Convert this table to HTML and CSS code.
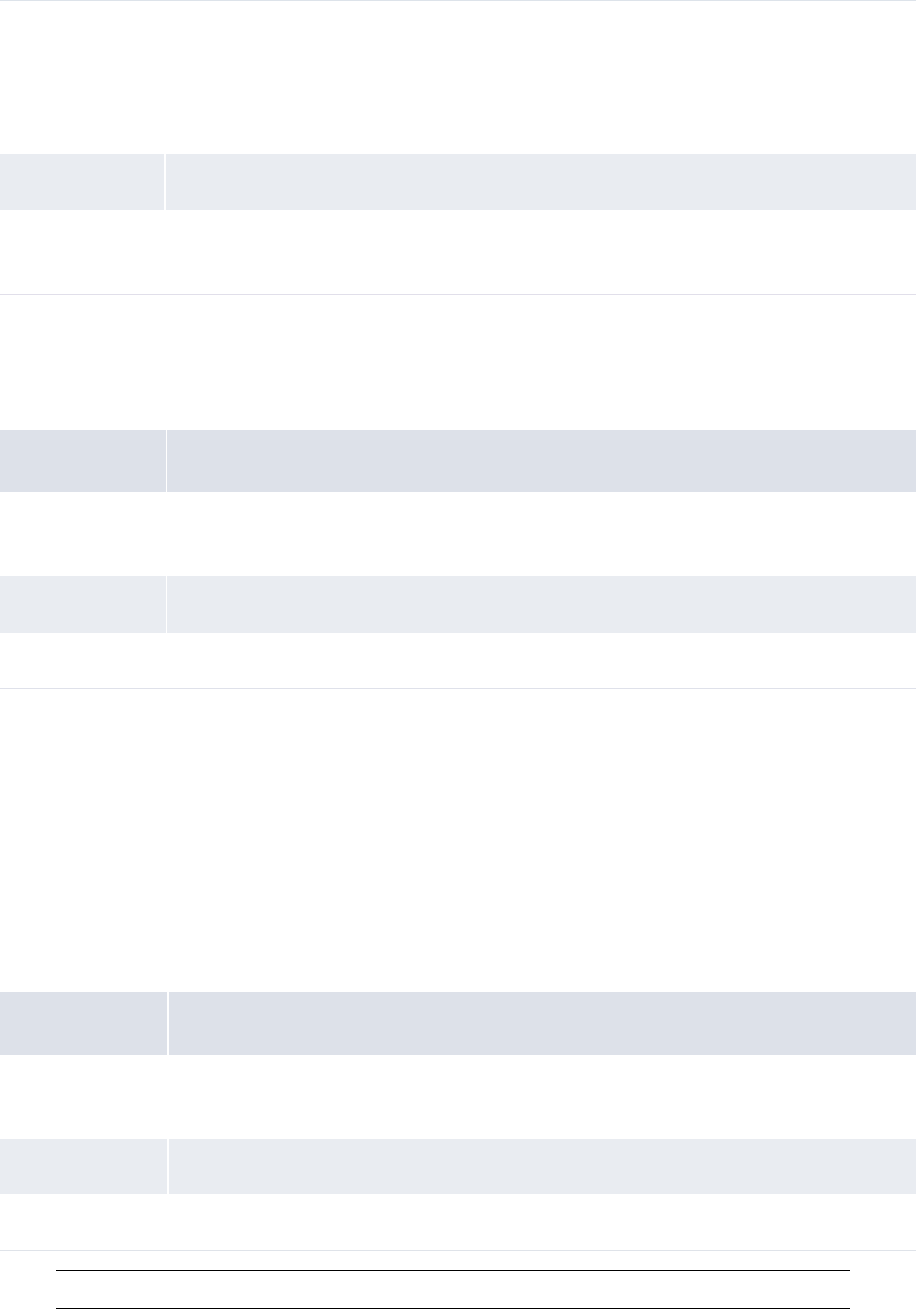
FILE: index.html
```html
<!DOCTYPE html>
<html lang="en">
<head>
<meta charset="utf-8">
<title>Document</title>
<link rel="stylesheet" href="styles.css">
</head>
<body>
<main class="doc">
  <section class="sec sec-1">
    <div class="row row-a light split-164">
      <div class="key"></div>
      <div class="val"></div>
    </div>
  </section>
  <section class="sec sec-2">
    <div class="row row-b dark split-166">
      <div class="key"></div>
      <div class="val"></div>
    </div>
    <div class="row row-c light split-166">
      <div class="key"></div>
      <div class="val"></div>
    </div>
  </section>
  <section class="sec sec-3">
    <div class="row row-d dark split-167">
      <div class="key"></div>
      <div class="val"></div>
    </div>
    <div class="row row-e light split-167">
      <div class="key"></div>
      <div class="val"></div>
    </div>
  </section>
  <footer class="foot">
    <div class="rule"></div>
    <div class="rule"></div>
  </footer>
</main>
</body>
</html>
```
FILE: styles.css
```css
html, body {
  margin: 0;
  padding: 0;
  background: #ffffff;
  font-family: "Liberation Sans", Arial, sans-serif;
}
.doc {
  display: flex;
  flex-direction: column;
  width: 916px;
}
.sec {
  display: flex;
  flex-direction: column;
}
.sec-1 {
  border-top: 1px solid #dde3ea;
  padding-top: 153px;
  padding-bottom: 84px;
}
.sec-2 {
  border-top: 1px solid #e1dfea;
  padding-top: 135px;
  padding-bottom: 55px;
}
.sec-3 {
  border-top: 1px solid #dfe1ea;
  padding-top: 303px;
  padding-bottom: 56px;
}
.row {
  display: flex;
}
.row + .row {
  margin-top: 84px;
}
.split-164 { gap: 2px; }
.split-164 .key { width: 164px; }
.split-166 { gap: 1px; }
.split-166 .key { width: 166px; }
.split-167 { gap: 2px; }
.split-167 .key { width: 167px; }
.val { flex: 1; }
.light .key, .light .val { background: #e9ecf1; }
.dark .key, .dark .val { background: #dde1e9; }
.row-a { height: 56px; }
.row-b { height: 62px; }
.row-c { height: 57px; }
.row-d { height: 63px; }
.row-e { height: 55px; }
.foot {
  border-top: 1px solid #dfe3e9;
  padding: 19px 0 0 56px;
  display: flex;
  flex-direction: column;
  gap: 37px;
}
.rule {
  width: 794px;
  height: 1px;
  background: #000000;
}
```
